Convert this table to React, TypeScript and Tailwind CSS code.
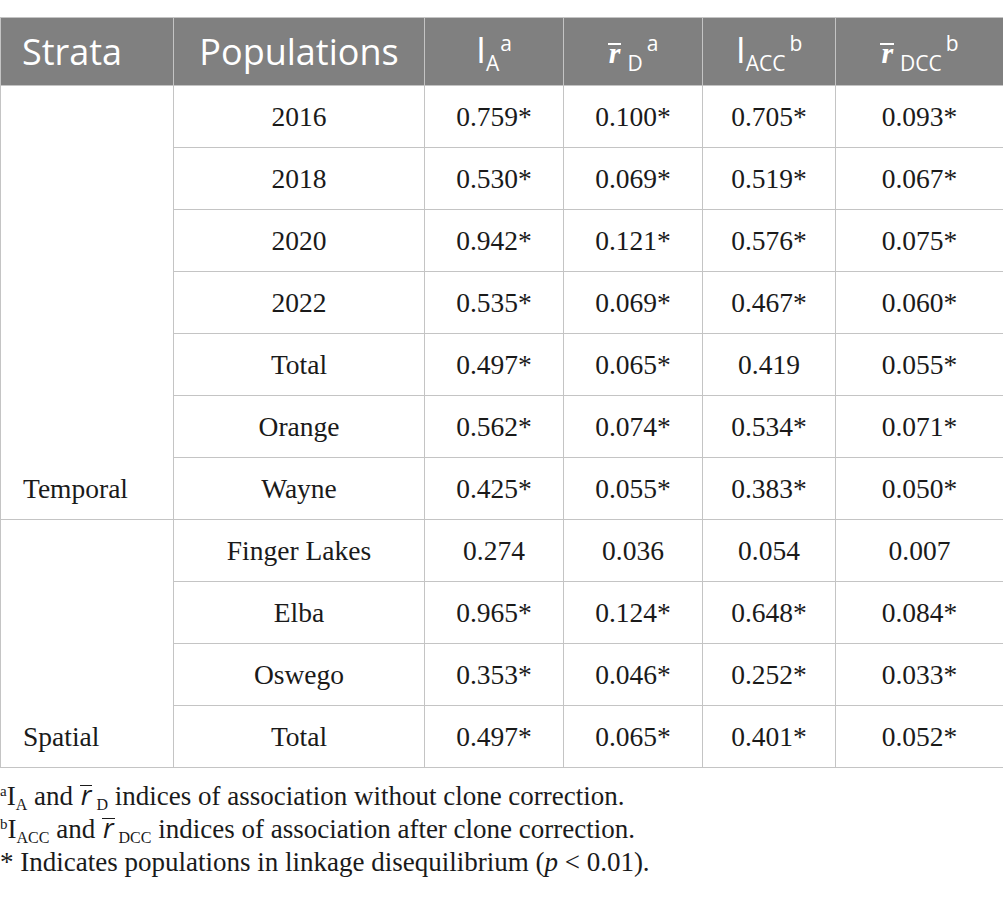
import React from "react";

const serif = { fontFamily: '"Liberation Serif", "Times New Roman", serif' };
const sans = { fontFamily: '"Open Sans", "Noto Sans", sans-serif' };

const HeadR = () => (
  <span
    className="inline-block px-[1px] italic font-bold text-[30px] leading-[16px] border-t-[2px] border-white"
    style={serif}
  >
    r
  </span>
);

const FootR = () => (
  <span
    className="inline-block pl-[1px] pr-[1px] italic text-[27px] leading-[18px] border-t-[1.5px] border-[#1a1a1a]"
    style={sans}
  >
    r
  </span>
);

type Row = [string, string, string, string, string];
const temporal: Row[] = [
  ["2016", "0.759*", "0.100*", "0.705*", "0.093*"],
  ["2018", "0.530*", "0.069*", "0.519*", "0.067*"],
  ["2020", "0.942*", "0.121*", "0.576*", "0.075*"],
  ["2022", "0.535*", "0.069*", "0.467*", "0.060*"],
  ["Total", "0.497*", "0.065*", "0.419", "0.055*"],
  ["Orange", "0.562*", "0.074*", "0.534*", "0.071*"],
  ["Wayne", "0.425*", "0.055*", "0.383*", "0.050*"],
];
const spatial: Row[] = [
  ["Finger Lakes", "0.274", "0.036", "0.054", "0.007"],
  ["Elba", "0.965*", "0.124*", "0.648*", "0.084*"],
  ["Oswego", "0.353*", "0.046*", "0.252*", "0.033*"],
  ["Total", "0.497*", "0.065*", "0.401*", "0.052*"],
];

const td = "border border-[#c4c4c4] text-center align-middle text-[27.5px] text-[#1a1a1a] leading-[32px]";
const th = "border border-[#c4c4c4] text-center align-middle font-normal text-white text-[36px] leading-[40px] whitespace-nowrap";
const sub = "align-[-8px] text-[21px] leading-none";
const sup = "align-[12px] text-[21px] leading-none";
const fsub = "align-[-5px] text-[16px] leading-none";
const fsup = "align-[9px] text-[15px] leading-none";

function Group({ label, rows }: { label: string; rows: Row[] }) {
  return (
    <>
      {rows.map((r, i) => (
        <tr key={i} className="h-[62px]">
          {i === 0 && (
            <td
              rowSpan={rows.length}
              className="border border-[#c4c4c4] align-bottom text-left pl-[22px] pb-[14px] text-[27.5px] text-[#1a1a1a] leading-[32px]"
            >
              {label}
            </td>
          )}
          {r.map((c, j) => (
            <td key={j} className={td}>
              {c}
            </td>
          ))}
        </tr>
      ))}
    </>
  );
}

export default function App() {
  return (
    <div className="w-[1003px] h-[897px] bg-white pt-[17px]" style={serif}>
      <table className="border-collapse table-fixed w-[1003px]">
        <colgroup>
          <col className="w-[173px]" />
          <col className="w-[251px]" />
          <col className="w-[139px]" />
          <col className="w-[139px]" />
          <col className="w-[133px]" />
          <col className="w-[168px]" />
        </colgroup>
        <thead>
          <tr className="h-[68px] bg-[#808080]" style={sans}>
            <th className={th + " text-left pl-[21px]"}>Strata</th>
            <th className={th}>Populations</th>
            <th className={th}>
              I<span className={sub}>A</span>
              <span className={sup + " ml-[1px]"}>a</span>
            </th>
            <th className={th}>
              <HeadR />
              <span className={sub + " ml-[6px]"}>D</span>
              <span className={sup + " ml-[4px]"}>a</span>
            </th>
            <th className={th}>
              I<span className={sub}>ACC</span>
              <span className={sup + " ml-[4px]"}>b</span>
            </th>
            <th className={th}>
              <HeadR />
              <span className={sub + " ml-[6px]"}>DCC</span>
              <span className={sup + " ml-[4px]"}>b</span>
            </th>
          </tr>
        </thead>
        <tbody>
          <Group label="Temporal" rows={temporal} />
          <Group label="Spatial" rows={spatial} />
        </tbody>
      </table>
      <div className="pt-[12px] text-[27px] leading-[32.5px] text-[#1a1a1a] whitespace-nowrap">
        <div>
          <span className={fsup}>a</span>I<span className={fsub}>A</span> and <FootR />
          <span className={fsub + " ml-[4px]"}>D</span> indices of association without clone correction.
        </div>
        <div>
          <span className={fsup}>b</span>I<span className={fsub}>ACC</span> and <FootR />
          <span className={fsub + " ml-[4px]"}>DCC</span> indices of association after clone correction.
        </div>
        <div>
          * Indicates populations in linkage disequilibrium (<i>p</i> &lt; 0.01).
        </div>
      </div>
    </div>
  );
}
